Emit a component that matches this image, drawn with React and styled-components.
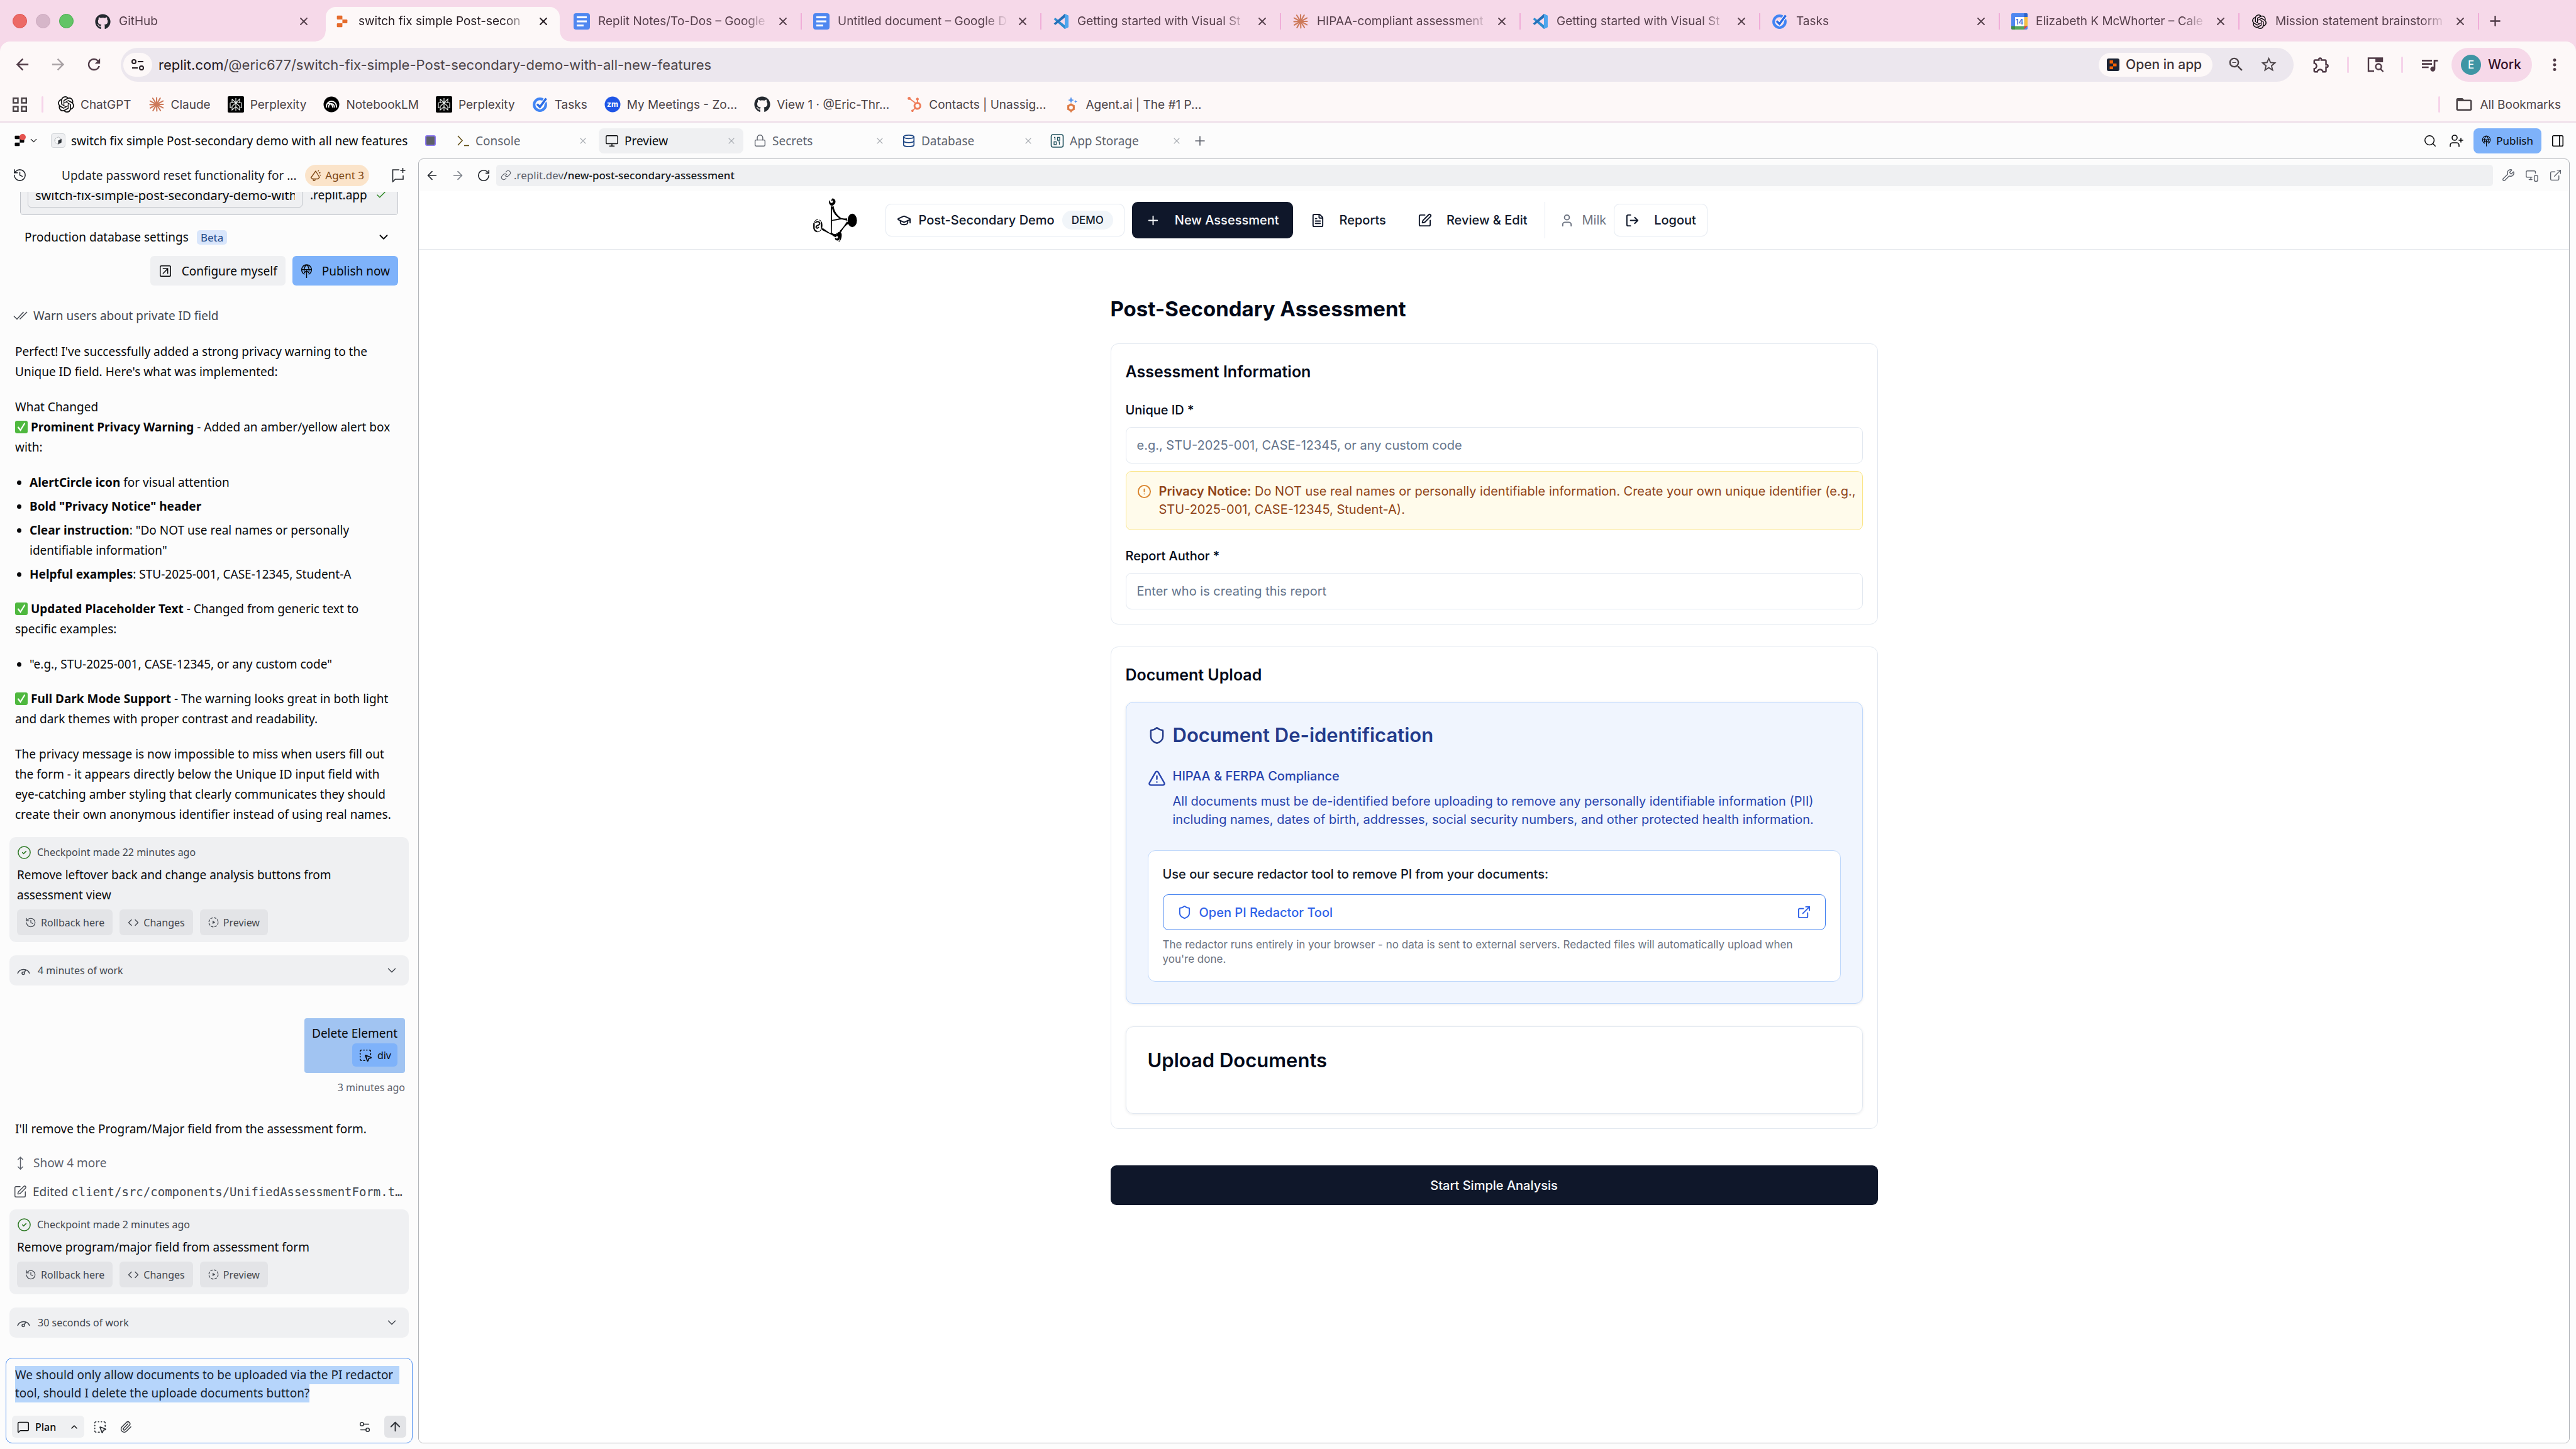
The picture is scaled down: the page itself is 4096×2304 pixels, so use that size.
import React, { useEffect, useRef } from "react";
import styled, { createGlobalStyle, css } from "styled-components";
import {
  X, Plus, Search, UserPlus, PanelRight, Lock, Monitor, Database, History, Wrench,
  MonitorSmartphone, ExternalLink, ArrowLeft, ArrowRight, RotateCw, Link, ChevronDown,
  ChevronUp, Check, SquareArrowUpRight, CheckCheck, CircleCheck, Code, MoveVertical, SquarePen,
  MessageSquare, SquareDashedMousePointer, Paperclip, Settings2, ArrowUp, GraduationCap,
  FileText, User, LogOut, CircleAlert, Shield, TriangleAlert,
} from "lucide-react";
import {
  MdArrowBack, MdArrowForward, MdRefresh, MdStarBorder, MdOutlineExtension, MdQueueMusic,
  MdMoreVert, MdZoomOut, MdFolderOpen,
} from "react-icons/md";
import { FaGithub, FaHubspot } from "react-icons/fa";
import { SiOpenai } from "react-icons/si";

/* ---------- base ---------- */

const chromeFont = `Inter, "Liberation Sans", sans-serif`;
const replitFont = `"Noto Sans", "Open Sans", sans-serif`;

const GlobalStyle = createGlobalStyle`
  * { box-sizing: border-box; }
  body { margin: 0; background: #fcfcfc; font-family: ${chromeFont}; }
  button, input, textarea { font: inherit; color: inherit; }
  button { border: 0; background: none; padding: 0; margin: 0; }
  h1, h2, h3, p, ul { margin: 0; padding: 0; font-weight: inherit; }
  svg { display: block; flex: none; }
`;

const Shell = styled.div`
  display: flex;
  flex-direction: column;
  height: 100vh;
  overflow: hidden;
`;

/* ---------- browser tab strip ---------- */

const TabStrip = styled.header`
  display: flex;
  align-items: stretch;
  height: 66px;
  flex: none;
  background: #f6d9e9;
`;

const TrafficLights = styled.div`
  display: flex;
  align-items: center;
  gap: 14px;
  width: 132px;
  padding-left: 20px;
  flex: none;
`;

const Light = styled.span`
  width: 23px;
  height: 23px;
  border-radius: 50%;
  background: ${(p) => p.$color};
  border: 1px solid ${(p) => p.$edge};
`;

const BrowserTab = styled.div`
  position: relative;
  display: flex;
  align-items: center;
  flex: 0 1 381px;
  min-width: 0;
  padding: 2px 20px 0 18px;
  color: ${(p) => (p.$active ? "#241a20" : "#553f4b")};
  font-size: 19px;
  line-height: 24px;
  ${(p) => p.$divider && css`
    &::after {
      content: "";
      position: absolute;
      right: 0;
      top: 21px;
      width: 2px;
      height: 26px;
      background: #f0add8;
    }
  `}
`;

const ActiveShape = styled.span`
  position: absolute;
  inset: 11px 4px 0 5px;
  border-radius: 16px 16px 0 0;
  background: #fdf8f8;
  &::before, &::after {
    content: "";
    position: absolute;
    bottom: 0;
    width: 16px;
    height: 16px;
  }
  &::before { left: -16px; background: radial-gradient(circle at 0 0, transparent 15px, #fdf8f8 16px); }
  &::after { right: -16px; background: radial-gradient(circle at 100% 0, transparent 15px, #fdf8f8 16px); }
`;

const TabIcon = styled.span`
  position: relative;
  display: flex;
  justify-content: center;
  width: 26px;
  flex: none;
`;

const TabTitle = styled.span`
  position: relative;
  flex: 1;
  min-width: 0;
  margin: 0 8px 0 13px;
  overflow: hidden;
  white-space: nowrap;
  mask-image: linear-gradient(to right, #000 calc(100% - 44px), transparent calc(100% - 4px));
`;

const PlainButton = styled.button`
  position: relative;
  display: flex;
  align-items: center;
  justify-content: center;
`;

const NewTab = styled(PlainButton)`
  width: 50px;
  color: #503b47;
`;

/* ---------- browser toolbar ---------- */

const Chrome = styled.div`
  background: #f6d9e9;
  flex: none;
`;

const ChromeInner = styled.div`
  background: #fdf8f8;
  border-radius: 16px 16px 0 0;
  border-bottom: 2px solid #ecdce7;
`;

const Toolbar = styled.div`
  display: flex;
  align-items: center;
  height: 73px;
  padding: 0 6px 0 7px;
  color: #503b47;
`;

const ToolButton = styled(PlainButton)`
  width: 57px;
  height: 54px;
  color: ${(p) => (p.$dim ? "#a9a2a5" : "inherit")};
`;

const Omnibox = styled.div`
  display: flex;
  align-items: center;
  flex: 1;
  height: 54px;
  margin: 0 15px 0 14px;
  padding: 0 25px 0 4px;
  border-radius: 27px;
  background: #ece7ee;
`;

const SiteInfo = styled(PlainButton)`
  width: 46px;
  height: 38px;
  border-radius: 19px;
  background: #fdf8f8;
  color: #241a20;
`;

const Address = styled.div`
  flex: 1;
  padding-left: 10px;
  font-size: 22px;
  line-height: 30px;
  color: #4b4347;
  b { font-weight: 400; color: #1d161a; }
`;

const OpenInApp = styled(PlainButton)`
  gap: 10px;
  height: 38px;
  padding: 0 17px 0 13px;
  border-radius: 19px;
  background: #fdf8f8;
  color: #3d3439;
  font-size: 21px;
  font-weight: 500;
`;

const OmniButton = styled(PlainButton)`
  margin-left: 23px;
  width: 29px;
  color: #4b4347;
`;

const Divider = styled.span`
  width: 3px;
  height: 26px;
  flex: none;
  margin: 0 ${(p) => p.$gap || 13}px;
  border-radius: 2px;
  background: #f6d4ea;
`;

const Profile = styled(PlainButton)`
  gap: 11px;
  height: 54px;
  margin: 0 7px;
  padding: 0 17px 0 15px;
  border-radius: 27px;
  background: #f6d9e9;
  color: #33122a;
  font-size: 21px;
  font-weight: 500;
`;

const Avatar = styled.span`
  width: 32px;
  height: 32px;
  border-radius: 50%;
  background: #3f95a4;
  color: #fff;
  font-size: 17px;
  line-height: 32px;
  font-weight: 400;
`;

const Bookmarks = styled.nav`
  display: flex;
  align-items: center;
  height: 54px;
  padding: 0 24px 0 20px;
  color: #4b4347;
  font-size: 19px;
`;

const BookmarkList = styled.div`
  display: flex;
  flex: 1;
  gap: 27px;
`;

const Bookmark = styled.a`
  display: flex;
  align-items: center;
  gap: 10px;
  color: inherit;
  text-decoration: none;
  white-space: nowrap;
`;

/* ---------- workspace header ---------- */

const WorkspaceBar = styled.header`
  display: flex;
  align-items: center;
  height: 57px;
  flex: none;
  padding-right: 18px;
  font-family: ${replitFont};
  font-size: 19px;
  color: #07080a;
`;

const ProjectTitle = styled.div`
  display: flex;
  align-items: center;
  width: 716px;
  flex: none;
  padding-left: 22px;
  white-space: nowrap;
`;

const LogoButton = styled(PlainButton)`
  gap: 5px;
  margin-right: 19px;
`;

const Badge = styled.span`
  position: absolute;
  top: -2px;
  left: 9px;
  width: 10px;
  height: 10px;
  border-radius: 50%;
  background: #e5534f;
`;

const AppTile = styled.span`
  display: flex;
  align-items: center;
  justify-content: center;
  width: 23px;
  height: 23px;
  margin-right: 9px;
  border: 1px solid #d3d6da;
  border-radius: 4px;
  background: #eff0f2;
`;

const RunMark = styled.span`
  width: 17px;
  height: 17px;
  margin-left: 28px;
  border: 2px solid #8c79f2;
  border-radius: 3px;
  background: #5d6068;
`;

const ToolTab = styled.div`
  display: flex;
  align-items: center;
  gap: 9px;
  flex: 0 1 230px;
  height: 40px;
  margin-right: 6px;
  padding: 0 11px 0 10px;
  border-radius: 8px;
  background: ${(p) => (p.$active ? "#eff0f2" : "transparent")};
  color: ${(p) => (p.$active ? "#07080a" : "#5d626c")};
  span { flex: 1; }
`;

const CloseMark = styled(PlainButton)`
  color: #a8acb2;
`;

const BarActions = styled.div`
  display: flex;
  align-items: center;
  gap: 19px;
  margin-left: auto;
`;

const PublishButton = styled(PlainButton)`
  gap: 8px;
  height: 40px;
  padding: 0 13px;
  border-radius: 8px;
  margin: 0 -4px;
  background: #7eb2fa;
  color: #07080a;
  font-size: 17px;
`;

/* ---------- sidebar ---------- */

const Workspace = styled.div`
  display: flex;
  flex: 1;
  min-height: 0;
`;

const Sidebar = styled.aside`
  display: flex;
  flex-direction: column;
  width: 665px;
  flex: none;
  font-family: ${replitFont};
  font-size: 19px;
  line-height: 32px;
  color: #07080a;
`;

const ChatHeader = styled.div`
  display: flex;
  align-items: center;
  height: 53px;
  flex: none;
  padding: 0 20px;
  color: #20242a;
`;

const ChatTitle = styled.h2`
  flex: 1;
  padding-left: 55px;
  font-size: 19px;
  line-height: 28px;
  white-space: nowrap;
`;

const AgentBadge = styled.span`
  display: flex;
  align-items: center;
  gap: 6px;
  height: 34px;
  margin-right: 36px;
  padding: 0 8px;
  border-radius: 17px;
  background: #fbe4ca;
  color: #7c4512;
  font-size: 17px;
`;

const Chat = styled.div`
  display: flex;
  flex: 1;
  min-height: 0;
  flex-direction: column;
  justify-content: flex-end;
  overflow: hidden;
  padding: 0 15px 32px;
  > * { flex: none; }
`;

const DomainBox = styled.div`
  display: flex;
  align-items: center;
  height: 64px;
  margin: 0 17px 19px;
  padding: 0 17px 0 11px;
  border: 1px solid #c0c4ca;
  border-radius: 5px;
  background: #eff0f2;
`;

const DomainInput = styled.input`
  width: 437px;
  height: 40px;
  margin-right: 12px;
  padding: 0 11px;
  border: 1px solid #c0c4ca;
  border-radius: 5px;
  background: #eff0f2;
  font-size: 20px;
`;

const SettingsRow = styled.div`
  display: flex;
  align-items: center;
  gap: 13px;
  margin: 0 29px 14px 24px;
  > svg { margin-left: auto; }
`;

const Beta = styled.span`
  height: 23px;
  padding: 0 6px;
  border-radius: 5px;
  background: #d9e6fb;
  color: #1d4786;
  font-size: 17px;
  line-height: 23px;
`;

const PublishRow = styled.div`
  display: flex;
  justify-content: flex-end;
  gap: 11px;
  margin: 0 17px 34px;
`;

const LargeButton = styled(PlainButton)`
  gap: 15px;
  height: 47px;
  padding: 0 13px;
  border-radius: 6px;
  background: ${(p) => (p.$primary ? "#7eb2fa" : "#eff0f2")};
`;

const MutedRow = styled.div`
  display: flex;
  align-items: center;
  gap: 9px;
  margin: 0 0 ${(p) => p.$after}px 6px;
  line-height: 28px;
  white-space: nowrap;
  color: ${(p) => (p.$light ? "#5d626c" : "#42474f")};
`;

const CodeText = styled.code`
  flex: 1;
  margin-left: -4px;
  font-family: "DejaVu Sans Mono", "Liberation Mono", monospace;
  font-size: 19px;
`;

const Message = styled.p`
  margin: 0 0 ${(p) => p.$after || 24}px 9px;
  white-space: nowrap;
`;

const TickBox = styled.span`
  display: inline-block;
  vertical-align: -3px;
  margin-right: 5px;
`;

const Bullets = styled.ul`
  display: flex;
  flex-direction: column;
  gap: 6px;
  margin: 0 0 23px 32px;
  list-style: none;
  white-space: nowrap;
  li { position: relative; }
  li::before {
    content: "";
    position: absolute;
    left: -20px;
    top: 13px;
    width: 7px;
    height: 7px;
    border-radius: 50%;
    background: #07080a;
  }
`;

const Checkpoint = styled.section`
  margin-bottom: 21px;
  padding: 12px 12px 11px;
  border-radius: 10px;
  background: #eff0f2;
`;

const CheckpointMeta = styled.div`
  display: flex;
  align-items: center;
  gap: 9px;
  margin-bottom: 8px;
  font-size: 16px;
  line-height: 24px;
  color: #42474f;
  svg { color: #2f7a26; }
`;

const CheckpointActions = styled.div`
  display: flex;
  gap: 11px;
  margin-top: 7px;
`;

const SmallButton = styled(PlainButton)`
  gap: 7px;
  height: 41px;
  padding: 0 13px;
  border-radius: 6px;
  background: #e3e4e7;
  color: #42474f;
  font-size: 16px;
`;

const WorkSummary = styled.button`
  display: flex;
  align-items: center;
  gap: 12px;
  height: 48px;
  margin-bottom: ${(p) => p.$after || 0}px;
  padding: 0 16px 0 12px;
  border-radius: 10px;
  background: #eff0f2;
  color: #42474f;
  font-size: 16px;
  svg:last-child { margin-left: auto; }
`;

const Bubble = styled.div`
  display: flex;
  flex-direction: column;
  align-items: flex-end;
  align-self: flex-end;
  height: 87px;
  margin: 0 6px 11px 0;
  padding: 8px 12px;
  border-radius: 4px;
  background: #a1c4f2;
`;

const ElementChip = styled.span`
  display: flex;
  align-items: center;
  gap: 8px;
  height: 37px;
  padding: 0 10px;
  border-radius: 6px;
  background: #7eb2fa;
  font-size: 16px;
`;

const TimeStamp = styled.div`
  align-self: flex-end;
  margin: 0 6px 38px 0;
  font-size: 16px;
  line-height: 24px;
  color: #5d626c;
`;

const Composer = styled.form`
  margin: 0 9px 9px;
  flex: none;
  padding: 12px 9px 8px;
  border: 1px solid #4b8df0;
  border-radius: 10px;
`;

const Prompt = styled.textarea`
  display: block;
  width: 100%;
  height: 58px;
  padding: 0 0 0 5px;
  border: 0;
  outline: 0;
  resize: none;
  overflow: hidden;
  background: transparent;
  font-size: 19px;
  line-height: 29px;
  &::selection { background: #b6d5fb; color: #14202e; }
`;

const ComposerBar = styled.div`
  display: flex;
  align-items: center;
  gap: 20px;
  margin-top: 21px;
  color: #30343a;
`;

const PlanButton = styled(PlainButton)`
  gap: 9px;
  height: 35px;
  padding: 0 8px;
  margin-right: -6px;
  border-radius: 6px;
  background: #eff0f2;
  color: #07080a;
  font-size: 16px;
  font-weight: 500;
  svg:last-child { margin-left: 12px; }
`;

const SendButton = styled(PlainButton)`
  width: 35px;
  height: 35px;
  border-radius: 6px;
  background: #e3e4e7;
`;

const Spacer = styled.span`
  flex: 1;
`;

/* ---------- preview pane ---------- */

const Pane = styled.section`
  display: flex;
  flex-direction: column;
  flex: 1;
  min-width: 0;
  margin: 0 10px 9px 0;
  border: 1px solid #b2b5ba;
  border-radius: 8px;
  overflow: hidden;
  background: #fcfcfc;
`;

const PaneBar = styled.div`
  display: flex;
  align-items: center;
  height: 51px;
  flex: none;
  padding-right: 11px;
  font-family: ${replitFont};
  font-size: 17px;
  color: #20242a;
`;

const PaneButton = styled(PlainButton)`
  width: 41px;
  color: ${(p) => (p.$dim ? "#7a7f87" : "inherit")};
`;

const PaneAddress = styled.div`
  display: flex;
  align-items: center;
  gap: 4px;
  flex: 1;
  height: 34px;
  margin-right: 14px;
  padding: 0 7px;
  border-radius: 5px;
  background: #eff0f2;
  color: #5d626c;
  b { font-weight: 500; color: #14171b; }
`;

const PaneTools = styled.div`
  display: flex;
  gap: 16px;
  color: #5d626c;
`;

const Site = styled.div`
  flex: 1;
  background: #fff;
  color: #020817;
  font-size: 20px;
`;

const SiteHeader = styled.header`
  border-bottom: 1px solid #e4e7ec;
`;

const SiteNav = styled.nav`
  display: flex;
  align-items: center;
  max-width: 2190px;
  height: 92px;
  margin: 0 auto;
  font-weight: 500;
  color: #0f172a;
`;

const OutlineButton = styled(PlainButton)`
  gap: ${(p) => p.$gap || 12}px;
  height: 52px;
  padding: 0 17px;
  border: 1px solid #e2e8f0;
  border-radius: 9px;
  font-weight: 500;
`;

const DemoTag = styled.span`
  height: 30px;
  padding: 0 15px;
  border-radius: 15px;
  background: #f1f5f9;
  font-size: 17px;
  font-weight: 500;
  line-height: 30px;
`;

const NavGap = styled.span`
  width: 12px;
`;

const NavLink = styled.a`
  display: flex;
  align-items: center;
  gap: 23px;
  height: 58px;
  margin-right: 6px;
  padding: 0 22px;
  border-radius: 9px;
  text-decoration: none;
  background: ${(p) => (p.$active ? "#0f172a" : "transparent")};
  color: ${(p) => (p.$active ? "#f8fafc" : "#0f172a")};
`;

const Account = styled.div`
  display: flex;
  align-items: center;
  gap: 12px;
  height: 58px;
  margin-right: 12px;
  padding-left: 23px;
  border-left: 1px solid #e2e8f0;
  font-weight: 400;
  color: #6b7280;
`;

const LogoSlot = styled.a`
  margin-right: 35px;
`;

const Content = styled.main`
  max-width: 1220px;
  margin: 0 auto;
  padding-top: 74px;
`;

const PageTitle = styled.h1`
  margin-bottom: 35px;
  font-size: 33px;
  line-height: 40px;
  font-weight: 700;
`;

const Card = styled.section`
  margin-bottom: ${(p) => p.$after}px;
  padding: 28px 23px 23px;
  border: 1px solid #e2e8f0;
  border-radius: 12px;
`;

const CardTitle = styled.h2`
  margin-bottom: ${(p) => p.$after}px;
  font-size: 25px;
  line-height: 32px;
  font-weight: 600;
`;

const FieldLabel = styled.label`
  display: block;
  margin-bottom: 17px;
  line-height: 20px;
  font-weight: 500;
`;

const Field = styled.input`
  display: block;
  width: 100%;
  height: 58px;
  padding: 0 17px;
  border: 1px solid #e2e8f0;
  border-radius: 9px;
  background: #fff;
  &::placeholder { color: #64748b; opacity: 1; }
`;

const Notice = styled.div`
  display: flex;
  gap: 12px;
  margin: 12px 0 31px;
  padding: 17px 5px 17px 17px;
  border: 1px solid #fae588;
  border-radius: 9px;
  background: #fffbeb;
  color: #8f4317;
  line-height: 29px;
  svg { margin-top: 3px; color: #d9822b; }
  b { font-weight: 600; }
`;

const InfoPanel = styled.div`
  padding: 36px 34px 34px;
  border: 1px solid #bfd8fb;
  border-radius: 12px;
  background: #f0f5fe;
  box-shadow: 0 1px 4px rgba(15, 23, 42, 0.08);
  color: #2743ad;
`;

const PanelTitle = styled.h3`
  display: flex;
  align-items: center;
  gap: 11px;
  margin-bottom: ${(p) => p.$after || 0}px;
  font-size: 31px;
  line-height: 32px;
  font-weight: 600;
  color: ${(p) => p.$color || "inherit"};
`;

const Compliance = styled.div`
  display: flex;
  gap: 11px;
  line-height: 29px;
  margin-bottom: 34px;
  > svg { margin-top: 3px; }
  h4 { margin: 0 0 11px; font-weight: 500; }
`;

const ToolBox = styled.div`
  padding: 23px;
  border: 1px solid #bfd8fb;
  border-radius: 12px;
  background: #fff;
`;

const ToolPrompt = styled.p`
  margin-bottom: 17px;
  line-height: 29px;
  font-weight: 500;
  color: #111827;
`;

const ToolLink = styled.a`
  display: flex;
  align-items: center;
  gap: 12px;
  height: 57px;
  padding: 0 22px;
  border: 1px solid #3f7ff0;
  border-radius: 9px;
  color: #2f62e8;
  font-weight: 500;
  text-decoration: none;
  svg:last-child { margin-left: auto; }
`;

const ToolNote = styled.p`
  margin-top: 12px;
  font-size: 17px;
  line-height: 23px;
  color: #6b7280;
`;

const UploadPanel = styled.div`
  margin-top: 36px;
  padding: 37px 34px 68px;
  border: 1px solid #e2e8f0;
  border-radius: 12px;
  box-shadow: 0 1px 4px rgba(15, 23, 42, 0.08);
`;

const SubmitButton = styled.button`
  width: 100%;
  height: 63px;
  border-radius: 9px;
  background: #0f172a;
  color: #f8fafc;
  font-weight: 500;
`;

/* ---------- drawings ---------- */

const ReplitMark = ({ size, color }) => (
  <svg width={size} height={size} viewBox="0 0 24 24" fill={color}>
    <path d="M3.500 1h7.500a1.500 1.500 0 0 1 1.500 1.500v5.800h-9A1.500 1.500 0 0 1 2 6.800V2.500A1.500 1.500 0 0 1 3.500 1z" />
    <path d="M12.500 8.300h8a1.500 1.500 0 0 1 1.500 1.500v4.400a1.500 1.500 0 0 1-1.500 1.500h-8z" />
    <path d="M3.500 15.700h9v5.800A1.500 1.500 0 0 1 11 23H3.500A1.500 1.500 0 0 1 2 21.500v-4.300a1.500 1.500 0 0 1 1.500-1.500z" />
  </svg>
);

const DocsIcon = () => (
  <svg width="26" height="26" viewBox="0 0 26 26">
    <rect width="26" height="26" rx="4" fill="#4f87f0" />
    <path d="M5 5h16v3H5zM5 11.500h16v3H5zM5 18h11v3H5z" fill="#fff" />
  </svg>
);

const VsCodeIcon = () => (
  <svg width="26" height="26" viewBox="0 0 26 26">
    <path d="M19 1l6 3v18l-6 3L1.500 9.500 4 7.200 19 19z" fill="#2f8ccf" />
    <path d="M19 1L1.500 16.500 4 18.800 19 7z" fill="#2470b8" />
    <path d="M19 1l6 3v18l-6 3z" fill="#4ea6ee" />
  </svg>
);

const ClaudeIcon = () => (
  <svg width="26" height="26" viewBox="-13 -13 26 26" stroke="#cd7a5b" strokeWidth="2.100" strokeLinecap="round">
    {[0, 28, 58, 88, 120, 150, 178, 208, 238, 270, 300, 332].map((a, i) => (
      <line key={a} x1="0" y1="0" x2={(i % 3 ? 11.5 : 10.5) * Math.cos((a * Math.PI) / 180)} y2={(i % 3 ? 11.5 : 10.5) * Math.sin((a * Math.PI) / 180)} />
    ))}
  </svg>
);

const PerplexityIcon = () => (
  <svg width="26" height="26" viewBox="0 0 26 26" fill="none" stroke="#e6ecea" strokeWidth="1.200">
    <rect width="26" height="26" rx="2" fill="#000" stroke="none" />
    <path d="M13 3v20M7 4.500l6 6 6-6v6M7 4.500v6M4 10.500h18v8h-3M4 10.500v8h3M13 10.500l-6 5.500v6l6-5.500 6 5.500v-6z" />
  </svg>
);

const NotebookIcon = () => (
  <svg width="26" height="26" viewBox="0 0 26 26" fill="none" stroke="#fff" strokeWidth="1.800">
    <circle cx="13" cy="13" r="12.500" fill="#000" stroke="none" />
    <path d="M5 18v-2a8 8 0 0 1 16 0v2M8.500 18v-1.500a4.500 4.500 0 0 1 9 0V18M5.500 12.500c4-2.500 9-1 9.500 5.500" />
  </svg>
);

const TasksIcon = () => (
  <svg width="26" height="26" viewBox="0 0 26 26" fill="none">
    <circle cx="12.500" cy="13.500" r="9.300" stroke="#4285f4" strokeWidth="4.200" />
    <path d="M8 12.500l4.500 4.500L21.500 5" stroke="#fff" strokeWidth="6" />
    <path d="M8 12.500l4.500 4.500L22.500 3.500" stroke="#2b6be4" strokeWidth="3.600" />
  </svg>
);

const CalendarIcon = () => (
  <svg width="26" height="26" viewBox="0 0 26 26">
    <rect width="26" height="26" rx="2" fill="#4f87f0" />
    <path d="M20.500 0h3.500a2 2 0 0 1 2 2v4h-5.500z" fill="#2c64c8" />
    <path d="M20.500 6H26v14.500h-5.500z" fill="#f5bf42" />
    <path d="M6 20.500h14.500V26H6z" fill="#55a657" />
    <path d="M0 20.500h6V26H2a2 2 0 0 1-2-2z" fill="#3b8c4a" />
    <path d="M20.500 20.500H26L20.500 26z" fill="#e2493b" />
    <path d="M6 6h14.500v14.500H6z" fill="#fff" />
    <text x="13" y="17.500" fontSize="12" fontWeight="600" textAnchor="middle" fill="#3f74d8">14</text>
  </svg>
);

const ZoomIcon = () => (
  <svg width="26" height="26" viewBox="0 0 26 26">
    <circle cx="13" cy="13" r="12.500" fill="#1f55e6" />
    <text x="13" y="17" fontSize="12" fontWeight="700" textAnchor="middle" fill="#fff">zm</text>
  </svg>
);

const AgentAiIcon = () => (
  <svg width="26" height="26" viewBox="0 0 26 26" fill="none">
    <path d="M12 1l1.500 4 3.500 1-3.500 1.500L12 11l-1.500-3.500L7 6l3.500-1z M19.500 6l.8 1.700 1.700.8-1.700.8-.8 1.700-.8-1.700-1.700-.8 1.700-.8z" fill="#5a96ec" />
    <circle cx="12" cy="18" r="4.500" stroke="#dd7a45" strokeWidth="3.200" />
    <path d="M12 11.500v3M12 21.500v4M6 15l2 1M16 20l2 1M18 15l-2 1M8 20l-2 1" stroke="#dd7a45" strokeWidth="2.400" />
  </svg>
);

const GridIcon = () => (
  <svg width="23" height="23" viewBox="0 0 23 23" fill="none" stroke="#4b4347" strokeWidth="2.400">
    <path d="M1.200 1.200h7.300v7.300H1.200zM14.500 1.200h7.300v7.300h-7.300zM1.200 14.500h7.300v7.300H1.200zM14.500 14.500h7.300v7.300h-7.300z" />
  </svg>
);

const TuneIcon = () => (
  <svg width="22" height="22" viewBox="0 0 22 22" fill="none" stroke="currentColor" strokeWidth="2">
    <circle cx="5" cy="6" r="3" />
    <path d="M11 6h9M2 16h9" />
    <circle cx="17" cy="16" r="3" />
  </svg>
);

const TabSearchIcon = () => (
  <svg width="28" height="26" viewBox="0 0 28 26" fill="none" stroke="currentColor" strokeWidth="2.400">
    <path d="M12 23H3V2.500h22V9" />
    <path d="M14 2h12v7H14z" fill="currentColor" stroke="none" />
    <circle cx="19" cy="16" r="4.500" />
    <path d="M22 19.500l4.500 4.500" />
  </svg>
);

const ConsoleIcon = () => (
  <svg width="21" height="21" viewBox="0 0 21 21" fill="none" stroke="#5e4a0f" strokeWidth="1.500">
    <path d="M2 3l7 7.500L2 18M12 18.500h8" />
  </svg>
);

const StorageIcon = () => (
  <svg width="22" height="22" viewBox="0 0 22 22" fill="none" stroke="#22535f" strokeWidth="1.600">
    <rect x="1.500" y="1" width="19" height="20" rx="3" />
    <path d="M6 5.500h1.500V10M11.500 5.500h3.500V10h-3.500zM6 12.500h3.500V17H6zM13 12.500h1.500V17" strokeWidth="1.300" />
  </svg>
);

const GlobeUpIcon = ({ size }) => (
  <svg width={size} height={size + 3} viewBox="0 0 24 28" fill="none" stroke="currentColor" strokeWidth="1.800">
    <path d="M8 20.500A10 10 0 1 1 16 20.500M2 11h20M8 18C5.500 12 8 3.500 12 1.500c4 2 6.500 10.500 4 16.500" />
    <path d="M12 28V13M7.500 17.500L12 13l4.500 4.500" />
  </svg>
);

const AgentIcon = () => (
  <svg width="18" height="18" viewBox="0 0 18 18" fill="none" stroke="currentColor" strokeWidth="1.300" strokeLinejoin="round">
    <path d="M9 2L1.500 12.500 4 14.500h8.500L15 12 9 2zM5 14.500v1.500a1.500 1.500 0 0 0 3 0v-1.500M12.500 2.500l1.500-1.500M14 5l2.500-.5M15.500 8l1.500 1" />
  </svg>
);

const NewChatIcon = () => (
  <svg width="22" height="23" viewBox="0 0 22 23" fill="none" stroke="currentColor" strokeWidth="1.600">
    <path d="M12 3H1.500v19l4-4H18v-6M17.500 0v8M13.500 4h8" />
  </svg>
);

const PlayDashed = () => (
  <svg width="17" height="17" viewBox="0 0 17 17" fill="none" stroke="currentColor" strokeWidth="1.300">
    <circle cx="8.500" cy="8.500" r="7.300" strokeDasharray="4 1.800" />
    <path d="M7 5.800l4.200 2.700L7 11.200z" fill="currentColor" stroke="none" />
  </svg>
);

const GaugeIcon = () => (
  <svg width="21" height="18" viewBox="0 0 21 18" fill="none" stroke="currentColor" strokeWidth="1.500">
    <path d="M1 14a10 9.500 0 0 1 19 0" />
    <circle cx="10" cy="13.500" r="2" />
    <path d="M11.500 12l3-4" />
  </svg>
);

const CubeIcon = () => (
  <svg width="13" height="13" viewBox="0 0 13 13">
    <path d="M6.500.8l5.200 3v5.600l-5.200 3-5.200-3V3.800z" fill="#f8f9fa" stroke="#6c7178" strokeDasharray="1 1" strokeWidth=".8" />
    <path d="M6.500 6.500l5.200-2.700v5.600l-5.200 3z" fill="#2b3035" />
  </svg>
);

const Tick = () => (
  <TickBox>
    <svg width="20" height="20" viewBox="0 0 20 20">
      <rect width="20" height="20" rx="3" fill="#4fb83f" />
      <path d="M5 10.500l3.500 4.500L15 4.500" fill="none" stroke="#fff" strokeWidth="2.200" strokeLinecap="round" />
    </svg>
  </TickBox>
);

const DoubleTick = () => (
  <svg width="23" height="18" viewBox="0 0 23 18" fill="none" stroke="currentColor" strokeWidth="1.500">
    <path d="M1 9.500l5 5L16.500 3M10.500 14.500L22 3" />
  </svg>
);

const BrandLogo = () => (
  <svg width="92" height="80" viewBox="0 10 345 300" fill="#000">
    <path d="M150 76c7 5 14 4 17 0 2 28 20 56 46 72 12 3 24 3 34 2v14c-12-4-24-8-36-9-18 4-34 7-54 9v-5c16-3 30-6 44-9-24-16-38-36-43-60l-2 150h-6z" />
    <path d="M100 206l46 32 8-4c14 12 24 12 34 2l-6 26c-14-2-22-12-30-16L96 218z" />
    <path d="M246 168l14 10c-20 12-36 30-50 56l-8-8c18-18 30-36 44-58z" />
    <ellipse cx="278" cy="162" rx="28" ry="40" />
    <path d="M156 32a15 18 0 0 1 12 36c-6 9-18 8-24-2a20 20 0 0 1 0-26c0 10 4 18 11 18 8 0 10-10 6-14-4-4-9 0-8 5-4-8 2-14 8-14z" />
    <path d="M188 240c6-14 24-16 27 4 2 20-8 46-20 47 8-8 12-20 8-30 2 16-8 24-18 20-10-3-12-12-9-18 3 8 14 10 17 1 1-7-4-11-9-9 0-6 2-11 4-15z" />
    <g fill="none" stroke="#000">
      <ellipse cx="73" cy="193" rx="25" ry="37" strokeWidth="4" strokeDasharray="70 8" />
      <path d="M50 178v32c4 12 12 16 16 16M94 172v32" strokeWidth="8" />
      <path d="M58 176c10-12 28-6 26 6-4 12-22 8-22 20 2 10 14 6 16-2" strokeWidth="7" />
    </g>
  </svg>
);

/* ---------- data ---------- */

const browserTabs = [
  { title: "GitHub", icon: <FaGithub size={25} color="#24292f" /> },
  { title: "switch fix simple Post-secon", icon: <ReplitMark size={20} color="#e56b2c" />, active: true },
  { title: "Replit Notes/To-Dos – Google", icon: <DocsIcon />, divider: true },
  { title: "Untitled document – Google D", icon: <DocsIcon />, divider: true },
  { title: "Getting started with Visual St", icon: <VsCodeIcon />, divider: true },
  { title: "HIPAA-compliant assessment", icon: <ClaudeIcon />, divider: true },
  { title: "Getting started with Visual St", icon: <VsCodeIcon />, divider: true },
  { title: "Tasks", icon: <TasksIcon />, divider: true },
  { title: "Elizabeth K McWhorter – Cale", icon: <CalendarIcon />, divider: true },
  { title: "Mission statement brainstorm", icon: <SiOpenai size={23} color="#111" />, divider: true },
];

const bookmarks = [
  ["ChatGPT", <SiOpenai size={26} color="#111" />],
  ["Claude", <ClaudeIcon />],
  ["Perplexity", <PerplexityIcon />],
  ["NotebookLM", <NotebookIcon />],
  ["Perplexity", <PerplexityIcon />],
  ["Tasks", <TasksIcon />],
  ["My Meetings - Zo...", <ZoomIcon />],
  ["View 1 · @Eric-Thr...", <FaGithub size={26} color="#24292f" />],
  ["Contacts | Unassig...", <FaHubspot size={24} color="#ee7b58" />],
  ["Agent.ai | The #1 P...", <AgentAiIcon />],
];

const toolTabs = [
  { name: "Console", icon: <ConsoleIcon /> },
  { name: "Preview", icon: <Monitor size={22} strokeWidth={1.6} />, active: true },
  { name: "Secrets", icon: <Lock size={21} strokeWidth={1.6} /> },
  { name: "Database", icon: <Database size={22} strokeWidth={1.8} color="#1c4583" /> },
  { name: "App Storage", icon: <StorageIcon /> },
];

const CheckpointCard = ({ when, children }) => (
  <Checkpoint>
    <CheckpointMeta>
      <CircleCheck size={23} strokeWidth={1.6} />
      Checkpoint made {when}
    </CheckpointMeta>
    <p>{children}</p>
    <CheckpointActions>
      <SmallButton type="button"><History size={18} strokeWidth={1.6} />Rollback here</SmallButton>
      <SmallButton type="button"><Code size={18} strokeWidth={1.8} />Changes</SmallButton>
      <SmallButton type="button"><PlayDashed />Preview</SmallButton>
    </CheckpointActions>
  </Checkpoint>
);

/* ---------- page ---------- */

function BrowserChrome() {
  return (
    <>
      <TabStrip>
        <TrafficLights>
          <Light $color="#ec6a66" $edge="#e0524e" />
          <Light $color="#d6b6c9" $edge="#cdabc0" />
          <Light $color="#63c466" $edge="#43ad4b" />
        </TrafficLights>
        {browserTabs.map((t, i) => (
          <BrowserTab key={i} $active={t.active} $divider={t.divider}>
            {t.active && <ActiveShape />}
            <TabIcon>{t.icon}</TabIcon>
            <TabTitle>{t.title}</TabTitle>
            <PlainButton aria-label="Close tab"><X size={20} strokeWidth={2.2} /></PlainButton>
          </BrowserTab>
        ))}
        <NewTab aria-label="New tab"><Plus size={25} strokeWidth={2.2} /></NewTab>
      </TabStrip>
      <Chrome>
        <ChromeInner>
          <Toolbar>
            <ToolButton aria-label="Back"><MdArrowBack size={29} /></ToolButton>
            <ToolButton aria-label="Forward" $dim><MdArrowForward size={29} /></ToolButton>
            <ToolButton aria-label="Reload"><MdRefresh size={29} /></ToolButton>
            <Omnibox>
              <SiteInfo aria-label="Site information"><TuneIcon /></SiteInfo>
              <Address role="textbox" aria-label="Address">
                <b>replit.com</b>/@eric677/switch-fix-simple-Post-secondary-demo-with-all-new-features
              </Address>
              <OpenInApp>
                <svg width="20" height="20" viewBox="0 0 20 20">
                  <rect width="20" height="20" rx="3" fill="#1c2333" />
                  <path d="M4.500 3h5.500v5H4.500zM10 8h5.500v4.500H10zM4.500 12.500H10V17H4.500z" fill="#f26207" />
                </svg>
                Open in app
              </OpenInApp>
              <OmniButton aria-label="Zoom"><MdZoomOut size={29} /></OmniButton>
              <OmniButton aria-label="Bookmark"><MdStarBorder size={29} /></OmniButton>
            </Omnibox>
            <ToolButton aria-label="Extensions"><MdOutlineExtension size={30} /></ToolButton>
            <Divider />
            <ToolButton aria-label="Search tabs"><TabSearchIcon /></ToolButton>
            <Divider />
            <ToolButton aria-label="Media"><MdQueueMusic size={32} /></ToolButton>
            <Profile><Avatar>E</Avatar>Work</Profile>
            <ToolButton aria-label="Menu"><MdMoreVert size={30} /></ToolButton>
          </Toolbar>
          <Bookmarks aria-label="Bookmarks">
            <GridIcon />
            <Divider $gap={23} />
            <BookmarkList>
              {bookmarks.map(([name, icon], i) => (
                <Bookmark href="#" key={i}><TabIcon>{icon}</TabIcon>{name}</Bookmark>
              ))}
            </BookmarkList>
            <Divider $gap={23} />
            <Bookmark href="#"><MdFolderOpen size={30} />All Bookmarks</Bookmark>
          </Bookmarks>
        </ChromeInner>
      </Chrome>
    </>
  );
}

function ChatPanel() {
  const prompt = useRef(null);
  useEffect(() => {
    prompt.current.focus();
    prompt.current.select();
  }, []);
  return (
    <Sidebar>
      <ChatHeader>
        <PlainButton aria-label="History"><History size={23} strokeWidth={1.6} /></PlainButton>
        <ChatTitle>Update password reset functionality for ...</ChatTitle>
        <AgentBadge><AgentIcon />Agent 3</AgentBadge>
        <PlainButton aria-label="New chat"><NewChatIcon /></PlainButton>
      </ChatHeader>
      <Chat>
        <DomainBox>
          <DomainInput aria-label="Domain" defaultValue="switch-fix-simple-post-secondary-demo-with" />
          .replit.app
          <Spacer />
          <Check size={18} strokeWidth={2} color="#2f8a26" />
        </DomainBox>
        <SettingsRow>
          Production database settings <Beta>Beta</Beta>
          <ChevronDown size={22} strokeWidth={2} />
        </SettingsRow>
        <PublishRow>
          <LargeButton><SquareArrowUpRight size={22} strokeWidth={1.6} />Configure myself</LargeButton>
          <LargeButton $primary><GlobeUpIcon size={19} />Publish now</LargeButton>
        </PublishRow>
        <MutedRow $after={27}><DoubleTick />Warn users about private ID field</MutedRow>
        <Message>
          Perfect! I've successfully added a strong privacy warning to the<br />
          Unique ID field. Here's what was implemented:
        </Message>
        <Message>
          What Changed<br />
          <Tick /><b>Prominent Privacy Warning</b> - Added an amber/yellow alert box<br />
          with:
        </Message>
        <Bullets>
          <li><b>AlertCircle icon</b> for visual attention</li>
          <li><b>Bold "Privacy Notice" header</b></li>
          <li><b>Clear instruction</b>: "Do NOT use real names or personally<br />identifiable information"</li>
          <li><b>Helpful examples</b>: STU-2025-001, CASE-12345, Student-A</li>
        </Bullets>
        <Message>
          <Tick /><b>Updated Placeholder Text</b> - Changed from generic text to<br />
          specific examples:
        </Message>
        <Bullets>
          <li>"e.g., STU-2025-001, CASE-12345, or any custom code"</li>
        </Bullets>
        <Message>
          <Tick /><b>Full Dark Mode Support</b> - The warning looks great in both light<br />
          and dark themes with proper contrast and readability.
        </Message>
        <Message $after={20}>
          The privacy message is now impossible to miss when users fill out<br />
          the form - it appears directly below the Unique ID input field with<br />
          eye-catching amber styling that clearly communicates they should<br />
          create their own anonymous identifier instead of using real names.
        </Message>
        <CheckpointCard when="22 minutes ago">
          Remove leftover back and change analysis buttons from<br />assessment view
        </CheckpointCard>
        <WorkSummary type="button" $after={52}><GaugeIcon />4 minutes of work<ChevronDown size={22} strokeWidth={1.6} /></WorkSummary>
        <Bubble>
          Delete Element
          <ElementChip><SquareDashedMousePointer size={22} strokeWidth={1.8} />div</ElementChip>
        </Bubble>
        <TimeStamp>3 minutes ago</TimeStamp>
        <Message>I'll remove the Program/Major field from the assessment form.</Message>
        <MutedRow $after={18} $light><MoveVertical size={23} strokeWidth={1.5} />Show 4 more</MutedRow>
        <MutedRow $after={14}><SquarePen size={22} strokeWidth={1.5} />Edited <CodeText>client/src/components/UnifiedAssessmentForm.t…</CodeText></MutedRow>
        <CheckpointCard when="2 minutes ago">Remove program/major field from assessment form</CheckpointCard>
        <WorkSummary type="button"><GaugeIcon />30 seconds of work<ChevronDown size={22} strokeWidth={1.6} /></WorkSummary>
      </Chat>
      <Composer>
        <Prompt
          ref={prompt}
          aria-label="Message"
          spellCheck={false}
          defaultValue="We should only allow documents to be uploaded via the PI redactor tool, should I delete the uploade documents button?"
        />
        <ComposerBar>
          <PlanButton type="button"><MessageSquare size={20} strokeWidth={1.8} />Plan<ChevronUp size={16} strokeWidth={2} /></PlanButton>
          <PlainButton type="button" aria-label="Select element"><SquareDashedMousePointer size={22} strokeWidth={1.8} /></PlainButton>
          <PlainButton type="button" aria-label="Attach"><Paperclip size={20} strokeWidth={1.7} /></PlainButton>
          <Spacer />
          <PlainButton type="button" aria-label="Options"><Settings2 size={22} strokeWidth={1.7} /></PlainButton>
          <SendButton aria-label="Send"><ArrowUp size={23} strokeWidth={2} /></SendButton>
        </ComposerBar>
      </Composer>
    </Sidebar>
  );
}

function AssessmentSite() {
  return (
    <Site>
      <SiteHeader>
        <SiteNav>
          <LogoSlot href="#" aria-label="Home"><BrandLogo /></LogoSlot>
          <OutlineButton><GraduationCap size={23} />Post-Secondary Demo<DemoTag>DEMO</DemoTag></OutlineButton>
          <NavGap />
          <NavLink href="#" $active><Plus size={23} />New Assessment</NavLink>
          <NavLink href="#"><FileText size={23} />Reports</NavLink>
          <NavLink href="#"><SquarePen size={23} />Review &amp; Edit</NavLink>
          <Account><User size={23} />Milk</Account>
          <OutlineButton $gap={23}><LogOut size={23} />Logout</OutlineButton>
        </SiteNav>
      </SiteHeader>
      <Content>
        <PageTitle>Post-Secondary Assessment</PageTitle>
        <Card $after={35}>
          <CardTitle $after={35}>Assessment Information</CardTitle>
          <FieldLabel htmlFor="unique-id">Unique ID *</FieldLabel>
          <Field id="unique-id" placeholder="e.g., STU-2025-001, CASE-12345, or any custom code" />
          <Notice>
            <CircleAlert size={23} />
            <p>
              <b>Privacy Notice:</b> Do NOT use real names or personally identifiable information. Create your own unique identifier (e.g.,
              <br />STU-2025-001, CASE-12345, Student-A).
            </p>
          </Notice>
          <FieldLabel htmlFor="author">Report Author *</FieldLabel>
          <Field id="author" placeholder="Enter who is creating this report" />
        </Card>
        <Card $after={58}>
          <CardTitle $after={27}>Document Upload</CardTitle>
          <InfoPanel>
            <PanelTitle $color="#233a8a" $after={35}><Shield size={29} strokeWidth={2} />Document De-identification</PanelTitle>
            <Compliance>
              <TriangleAlert size={29} />
              <div>
                <h4>HIPAA &amp; FERPA Compliance</h4>
                <p>
                  All documents must be de-identified before uploading to remove any personally identifiable information (PII)<br />
                  including names, dates of birth, addresses, social security numbers, and other protected health information.
                </p>
              </div>
            </Compliance>
            <ToolBox>
              <ToolPrompt>Use our secure redactor tool to remove PI from your documents:</ToolPrompt>
              <ToolLink href="#"><Shield size={23} />Open PI Redactor Tool<ExternalLink size={23} /></ToolLink>
              <ToolNote>
                The redactor runs entirely in your browser - no data is sent to external servers. Redacted files will automatically upload when<br />
                you're done.
              </ToolNote>
            </ToolBox>
          </InfoPanel>
          <UploadPanel><PanelTitle>Upload Documents</PanelTitle></UploadPanel>
        </Card>
        <SubmitButton>Start Simple Analysis</SubmitButton>
      </Content>
    </Site>
  );
}

export default function App() {
  return (
    <Shell>
      <GlobalStyle />
      <BrowserChrome />
      <WorkspaceBar>
        <ProjectTitle>
          <LogoButton aria-label="Home">
            <ReplitMark size={18} color="#07080a" />
            <Badge />
            <ChevronDown size={17} strokeWidth={1.6} />
          </LogoButton>
          <AppTile><CubeIcon /></AppTile>
          switch fix simple Post-secondary demo with all new features
          <RunMark />
        </ProjectTitle>
        {toolTabs.map((t) => (
          <ToolTab key={t.name} $active={t.active}>
            {t.icon}<span>{t.name}</span>
            <CloseMark aria-label={`Close ${t.name}`}><X size={16} strokeWidth={1.6} /></CloseMark>
          </ToolTab>
        ))}
        <CloseMark aria-label="New tool"><Plus size={24} strokeWidth={1.6} color="#5d626c" /></CloseMark>
        <BarActions>
          <PlainButton aria-label="Search"><Search size={22} strokeWidth={1.6} /></PlainButton>
          <PlainButton aria-label="Invite"><UserPlus size={24} strokeWidth={1.6} /></PlainButton>
          <PublishButton><GlobeUpIcon size={15} />Publish</PublishButton>
          <PlainButton aria-label="Toggle panel"><PanelRight size={22} strokeWidth={1.7} /></PlainButton>
        </BarActions>
      </WorkspaceBar>
      <Workspace>
        <ChatPanel />
        <Pane>
          <PaneBar>
            <PaneButton aria-label="Back"><ArrowLeft size={22} strokeWidth={1.8} /></PaneButton>
            <PaneButton aria-label="Forward" $dim><ArrowRight size={22} strokeWidth={1.8} /></PaneButton>
            <PaneButton aria-label="Reload"><RotateCw size={22} strokeWidth={1.8} /></PaneButton>
            <PaneAddress role="textbox" aria-label="Preview address">
              <Link size={17} strokeWidth={1.6} /><span>.replit.dev<b>/new-post-secondary-assessment</b></span>
            </PaneAddress>
            <PaneTools>
              <PlainButton aria-label="Developer tools"><Wrench size={21} strokeWidth={1.6} /></PlainButton>
              <PlainButton aria-label="Device size"><MonitorSmartphone size={22} strokeWidth={1.6} /></PlainButton>
              <PlainButton aria-label="Open in new tab"><ExternalLink size={21} strokeWidth={1.6} /></PlainButton>
            </PaneTools>
          </PaneBar>
          <AssessmentSite />
        </Pane>
      </Workspace>
    </Shell>
  );
}
